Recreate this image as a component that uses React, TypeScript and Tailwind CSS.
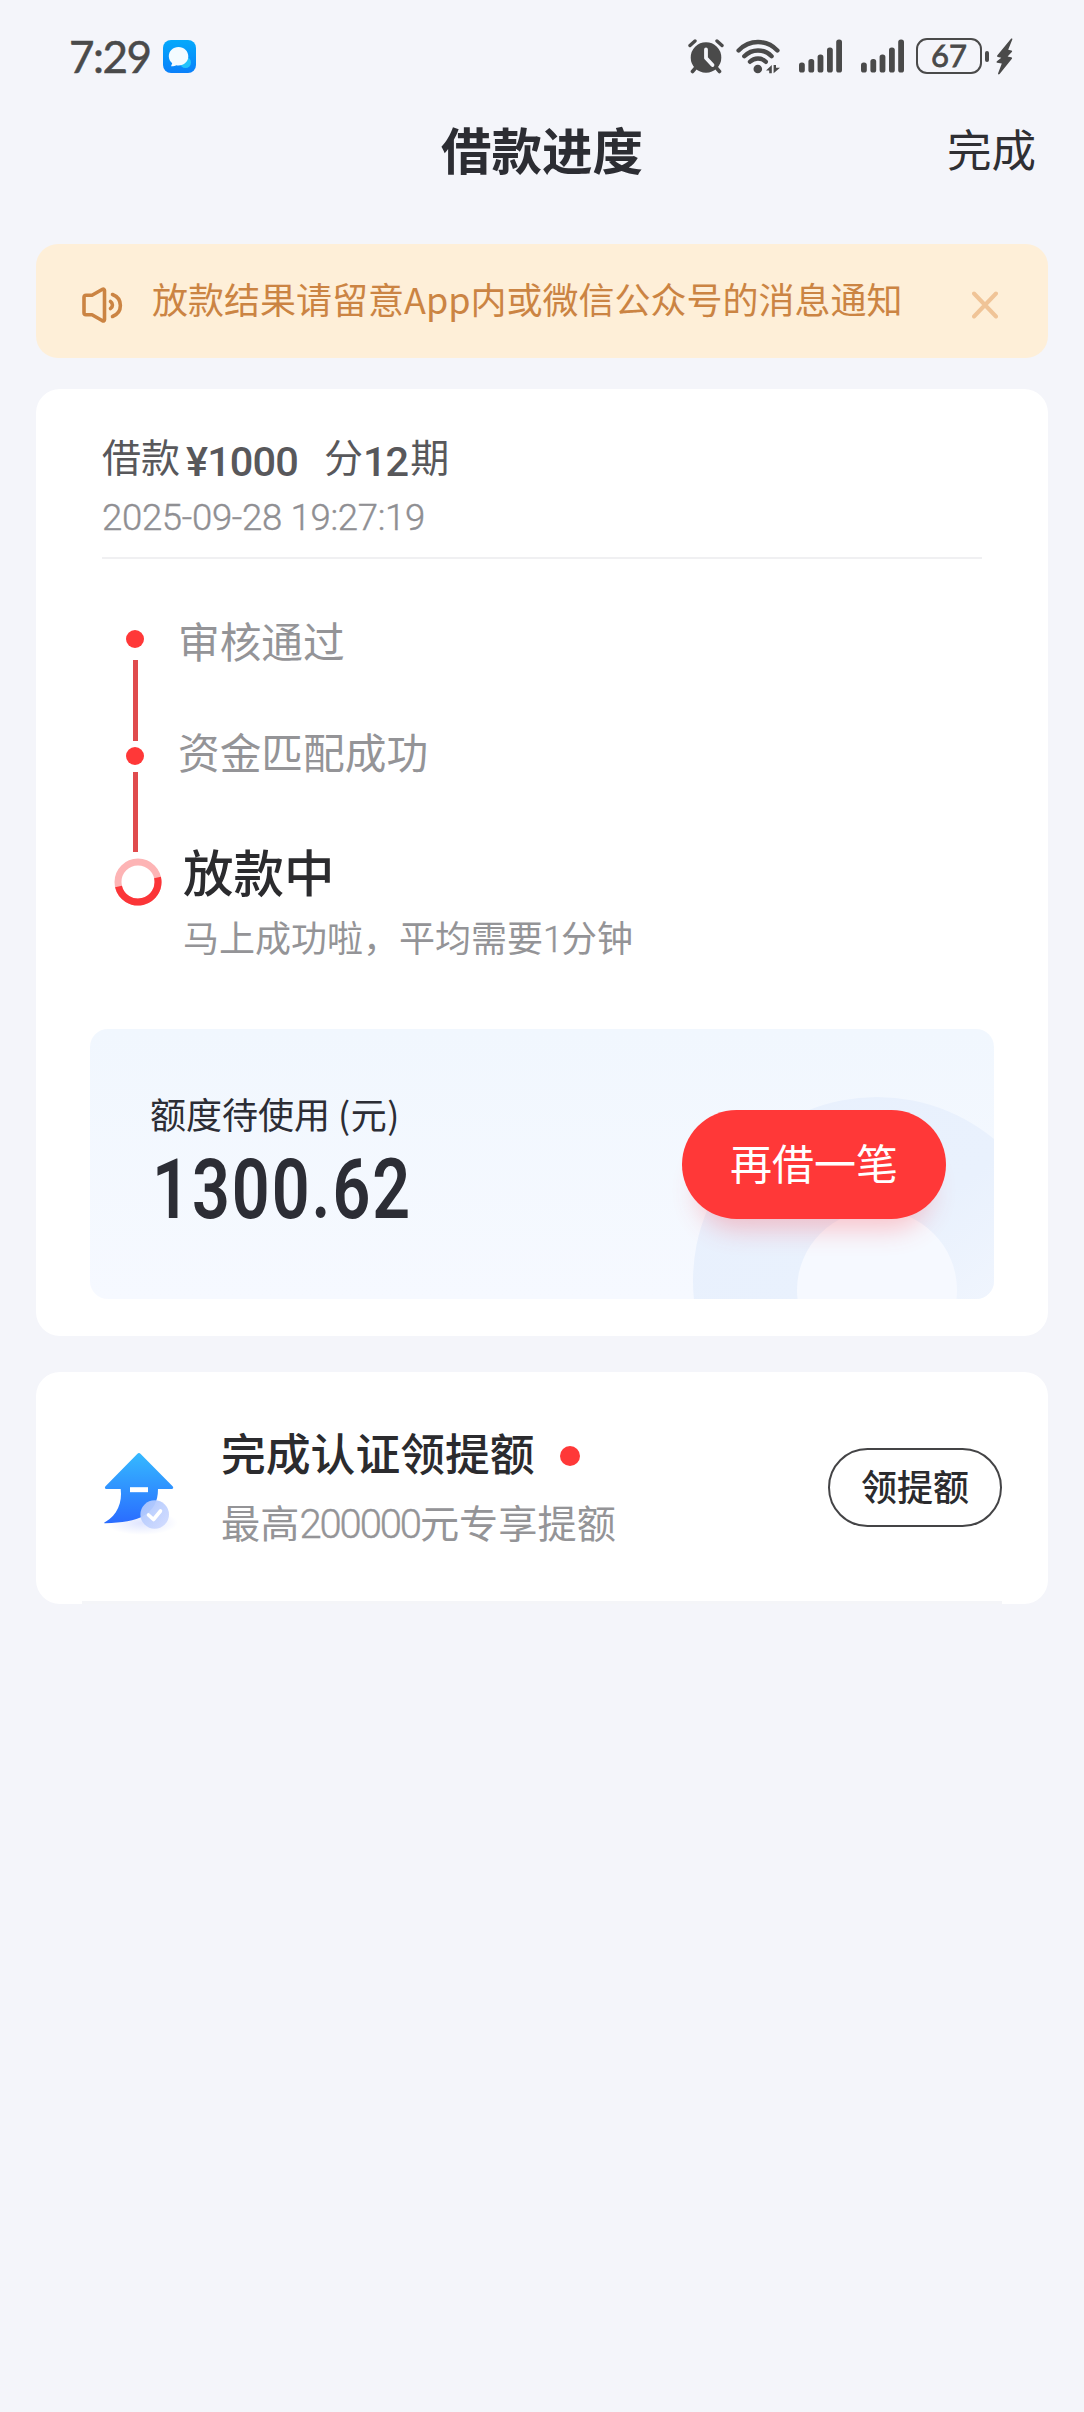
// src/App.tsx

import React from 'react';

interface StepItem {
    label: string;
    className: string;
}

const doneSteps: StepItem[] = [
    { label: '审核通过', className: 'mt-[51px]' },
    { label: '资金匹配成功', className: 'mt-[51px]' },
];

const signalBars = [
    { x: 0, h: 10 },
    { x: 9.4, h: 13.5 },
    { x: 18.6, h: 18 },
    { x: 28, h: 25 },
    { x: 37.2, h: 33 },
];

const MessageAppIcon: React.FC = () => (
    <svg className="ml-[12px] w-[33px] h-[33px]" viewBox="0 0 33 33">
        <defs>
            <linearGradient id="msgBg" x1="0" y1="0" x2="0" y2="1">
                <stop offset="0" stopColor="#04a9fb" />
                <stop offset="1" stopColor="#0a80fa" />
            </linearGradient>
        </defs>
        <rect width="33" height="33" rx="8" fill="url(#msgBg)" />
        <circle cx="22.5" cy="22.5" r="5.5" fill="#22c3fb" />
        <path d="M15.5 7C10 7 5.800 11 5.800 16.300c0 2.900 1.300 5.200 3.400 6.900L8 26.200c2 .2 4-.4 5.200-1 .8.200 1.500.3 2.300.3 5.500 0 9.800-4 9.800-9.200S21 7 15.500 7z" fill="#f3fbff" />
    </svg>
);

const AlarmIcon: React.FC = () => (
    <svg className="w-[36px] h-[35px]" viewBox="0 0 36 35" fill="none" strokeLinecap="round">
        <circle cx="18" cy="18.500" r="15.300" fill="#4a4a4a" />
        <path d="M2 6.500 7 2M34 6.500 29 2" stroke="#4a4a4a" strokeWidth="3.400" />
        <path d="m7.500 29-3 3.500M28.500 29l3 3.500" stroke="#4a4a4a" strokeWidth="3.600" />
        <path d="M18 10.500v8.500l6.500 7" stroke="#f4f5fa" strokeWidth="3.800" strokeLinejoin="round" />
    </svg>
);

const WifiIcon: React.FC = () => (
    <svg className="ml-[12px] w-[44px] h-[35px]" viewBox="0 0 44 35" fill="none" stroke="#4a4a4a" strokeWidth="4.400" strokeLinecap="round">
        <path d="M2.600 11.500C13.500.2 30.500.2 41.400 11.500" />
        <path d="M8.300 17.200c7.700-7.700 19.600-7.700 27.300 0" />
        <path d="M14 22.800c4.400-4.400 11.600-4.400 15.800 0" />
        <circle cx="21.800" cy="30" r="4.300" fill="#4a4a4a" stroke="none" />
        <path d="M35.800 26v8.300h-2.600V31.500h-3.200zM37.600 34.300V26h2.400v2.800h4z" fill="#4a4a4a" stroke="none" />
    </svg>
);

const SignalIcon: React.FC = () => (
    <svg className="ml-[19px] w-[43px] h-[34px]" viewBox="0 0 43 34" fill="#4a4a4a">
        {signalBars.map(bar => (
            <rect key={bar.x} x={bar.x} y={33.5 - bar.h} width="5.800" height={bar.h} rx="2.600" />
        ))}
    </svg>
);

const BoltIcon: React.FC = () => (
    <svg className="ml-[7px] w-[17px] h-[37px]" viewBox="0 0 17 37" fill="#4a4a4a">
        <path d="M15 .8 1.400 17.200c-.6.8-.4 1.500.5 1.700l3.400.8-4.400 3.600c-.6.6-.5 1.300.3 1.500l4.600.8-3.700 9.600c-.3 1.200.7 1.600 1.500.7L15.700 21c.7-.8.4-1.600-.5-1.800l-3.600-.8 4.200-4.400c.6-.7.4-1.400-.4-1.600l-3.200-.6L16.300 1.600c.4-1.100-.6-1.600-1.300-.8z" />
    </svg>
);

const SpeakerIcon: React.FC = () => (
    <svg className="w-[42px] h-[36px]" viewBox="0 0 42 36" fill="none" stroke="#cb8443" strokeWidth="3.600" strokeLinecap="round" strokeLinejoin="round">
        <path d="M20.500 2.300 10 8.200H4c-1.300 0-2 .8-2 2v15.600c0 1.200.7 2 2 2h6l10.500 6c1 .5 2 0 2-1.200V3.500c0-1.200-1-1.700-2-1.200z" />
        <path d="M28.500 14.500c2.600 1.700 2.600 5.400 0 7" />
        <path d="M30.500 7.500c10.500 4 10.500 18 0 22" />
    </svg>
);

const UpgradeIcon: React.FC = () => (
    <svg className="w-[84px] h-[90px]" viewBox="0 0 84 90">
        <defs>
            <linearGradient id="arrowFill" x1="0" y1="0" x2="0" y2="1">
                <stop offset="0" stopColor="#35b9ff" />
                <stop offset="1" stopColor="#2a6cff" />
            </linearGradient>
            <linearGradient id="badgeFill" x1="0" y1="0" x2="1" y2="1">
                <stop offset="0" stopColor="#a9c4fd" />
                <stop offset="1" stopColor="#d3dcff" />
            </linearGradient>
            <radialGradient id="glow">
                <stop offset="0" stopColor="#dfe5ff" />
                <stop offset="1" stopColor="#dfe5ff" stopOpacity="0" />
            </radialGradient>
        </defs>
        <ellipse cx="42" cy="78" rx="36" ry="12" fill="url(#glow)" />
        <path d="M40.700 8.900a2.500 2.500 0 0 0-3.500 0L5.500 41.200c-1.200 1.300-.6 2.800 1 2.800h14.200c1.800 13-3.500 26.500-15.500 33 -1.800.9-1 1.300.4 1.200C38 77.500 58 70 58 44h13.600c1.600 0 2.200-1.500 1-2.800z" fill="url(#arrowFill)" />
        <rect x="30" y="42.200" width="18" height="5" fill="#fff" />
        <circle cx="54.700" cy="69.500" r="14.300" fill="url(#badgeFill)" fillOpacity=".94" />
        <path d="m48.500 70 5 4.500 7-8.500" fill="none" stroke="#fff" strokeWidth="3.600" strokeLinecap="round" strokeLinejoin="round" />
    </svg>
);

const StatusBar: React.FC = () => (
    <div className="flex h-[40px] mt-[36px] pl-[69px] pr-[71px] items-center">
        <span className="font-['Lato'] text-[44px] leading-[40px] tracking-[-1.500px] text-[#4a4a4a] [-webkit-text-stroke:0.5px_#4a4a4a]">7:29</span>
        <MessageAppIcon />
        <div className="ml-auto flex items-center">
            <AlarmIcon />
            <WifiIcon />
            <SignalIcon />
            <SignalIcon />
            <div className="ml-[12px] w-[66px] h-[36px] rounded-[11px] border-[2px] border-[#4a4a4a] pb-[1px] flex items-center justify-center font-['Lato'] text-[31px] leading-none text-[#4a4a4a] [-webkit-text-stroke:0.8px_#4a4a4a]">
                67
            </div>
            <div className="ml-[3px] w-[4px] h-[11px] rounded-full bg-[#4a4a4a]" />
            <BoltIcon />
        </div>
    </div>
);

const TitleBar: React.FC = () => (
    <div className="grid grid-cols-3 h-[80px] mt-[32px] px-[48px] items-center">
        <span />
        <h1 className="text-center font-bold text-[50.500px] text-[#2c2d33]">借款进度</h1>
        <button className="text-right text-[44.500px] text-[#2f2f33]">完成</button>
    </div>
);

const NoticeBanner: React.FC = () => (
    <div className="mt-[56px] h-[114px] rounded-[22px] bg-[#feefd8] pl-[46px] pr-[50px] flex items-center">
        <div className="mt-[8px]">
            <SpeakerIcon />
        </div>
        <p className="ml-[28px] -mt-[6px] text-[36px] text-[#cb8443] whitespace-nowrap">
            放款结果请留意App内或微信公众号的消息通知
        </p>
        <svg className="ml-auto mt-[8px] w-[26px] h-[28px]" viewBox="0 0 26 28" stroke="#f0c497" strokeWidth="4" strokeLinecap="round">
            <path d="m2 2.500 22 23M24 2.500l-22 23" />
        </svg>
    </div>
);

const ProgressTimeline: React.FC = () => (
    <div className="flex h-[470px] pl-[78px]">
        <div className="w-[48px] pt-[71px] flex flex-col shrink-0">
            <div className="ml-[12px] size-[18px] rounded-full bg-[#ff3838]" />
            <div className="ml-[19px] mt-[12px] w-[5px] h-[81px] bg-[#e04b4d]" />
            <div className="ml-[12px] mt-[6px] size-[18px] rounded-full bg-[#ff3838]" />
            <div className="ml-[19px] mt-[7px] w-[5px] h-[80px] bg-[#e04b4d]" />
            <svg className="mt-[6px] size-[48px]" viewBox="0 0 48 48" fill="none" strokeWidth="7">
                <circle cx="24" cy="24" r="20" stroke="#fdb4b5" />
                <path d="M43.500 19.500A20 20 0 1 1 4.500 28.500" stroke="#fb3538" />
            </svg>
        </div>
        <div className="pl-[16px] flex flex-col">
            {doneSteps.map(step => (
                <div key={step.label} className={`${step.className} h-[60px] leading-[60px] text-[41.700px] text-[#949497]`}>
                    {step.label}
                </div>
            ))}
            <div className="mt-[59px] ml-[5px] h-[60px] leading-[60px] text-[50.500px] font-medium text-[#2b2b2e]">放款中</div>
            <div className="mt-[14px] ml-[5px] h-[44px] leading-[44px] text-[36px] text-[#949497]">
                马上成功啦，平均需要<span className="font-['Roboto'] font-light leading-none tracking-[-2px] [-webkit-text-stroke:0.4px_#949497]">1</span>分钟
            </div>
        </div>
    </div>
);

const QuotaPanel: React.FC = () => (
    <div className="relative overflow-hidden ml-[54px] w-[904px] h-[270px] rounded-[18px] bg-linear-to-b from-[#f1f7fe] to-[#f6f9ff] flex">
        <svg className="absolute left-0 top-0 w-[904px] h-[270px]" viewBox="0 0 904 270">
            <defs>
                <linearGradient id="ringFill" x1="0" y1="0" x2="0.8" y2="1">
                    <stop offset="0" stopColor="#e8f0fd" />
                    <stop offset=".5" stopColor="#e9f1fd" />
                    <stop offset=".85" stopColor="#f3f7fe" />
                </linearGradient>
            </defs>
            <circle cx="787" cy="252" r="184" fill="url(#ringFill)" />
            <circle cx="787" cy="261" r="80" fill="#f6f9ff" />
        </svg>
        <div className="relative pl-[60px] pt-[62px]">
            <div className="h-[44px] leading-[44px] text-[36px] text-[#2c2d35]">
                额度待使用 <span className="tracking-[0.500px]">(元)</span>
            </div>
            <div className="mt-[13px] ml-[2px] h-[84px] leading-[84px] font-['Roboto'] font-semibold text-[84px] tracking-[2.500px] text-[#2c2d35] origin-left scale-x-[0.79]">
                1300.62
            </div>
        </div>
        <button className="relative ml-auto mr-[48px] mt-[81px] w-[264px] h-[109px] rounded-full bg-[#ff3838] text-white text-[42px] pb-[6px] shadow-[0_26px_26px_-16px_rgba(255,70,80,0.3)]">
            再借一笔
        </button>
    </div>
);

const LoanCard: React.FC = () => (
    <section className="mt-[31px] h-[947px] rounded-[24px] bg-white pt-[44px]">
        <div className="pl-[66px] h-[44px] flex items-center text-[39px] text-[#58585b]">
            <span>借款</span>
            <span className="ml-[6px] mt-[13px] font-['Roboto'] font-medium text-[41.500px] leading-none tracking-[-0.900px]">¥1000</span>
            <span className="ml-[26px]">分</span>
            <span className="mt-[13px] font-['Roboto'] font-medium text-[41.500px] leading-none tracking-[-0.900px]">12</span>
            <span className="ml-[2px]">期</span>
        </div>
        <div className="mt-[19px] pl-[66px] h-[44px] leading-[44px] font-['Roboto'] font-light text-[36.500px] tracking-[-0.300px] text-[#8f8f93] [-webkit-text-stroke:0.4px_#8f8f93]">
            2025-09-28 19:27:19
        </div>
        <div className="mt-[17px] ml-[66px] mr-[66px] h-[2px] bg-[#f0f0f2]" />
        <ProgressTimeline />
        <QuotaPanel />
    </section>
);

const CertifyCard: React.FC = () => (
    <section className="mt-[36px] h-[232px] rounded-[24px] bg-white flex flex-col">
        <div className="flex-1 flex items-start pl-[64px] pr-[46px]">
            <div className="pt-[73px]">
                <UpgradeIcon />
            </div>
            <div className="ml-[37px] pt-[52px]">
                <div className="flex items-center h-[56px] text-[44.800px] font-medium text-[#2b2b2e]">
                    完成认证领提额
                    <span className="ml-[25px] mt-[7px] size-[20px] rounded-full bg-[#ff3838]" />
                </div>
                <div className="mt-[16px] h-[50px] leading-[50px] text-[39.200px] text-[#949497]">
                    最高<span className="font-['Roboto'] font-light text-[40px] leading-none tracking-[-2.100px] [-webkit-text-stroke:0.4px_#949497]">200000</span>元专享提额
                </div>
            </div>
            <button className="ml-auto mt-[76px] w-[174px] h-[79px] rounded-full border-2 border-[#444446] text-[36px] font-medium text-[#2b2b2e] pb-[6px]">
                领提额
            </button>
        </div>
        <div className="mx-[46px] h-[3px] bg-[#f4f5f8]" />
    </section>
);

const App: React.FC = () => {
    return (
        <div className="w-[1084px] h-[2412px] overflow-hidden bg-[#f4f5fa] font-['Noto_Sans_CJK_SC',sans-serif] leading-none">
            <StatusBar />
            <TitleBar />
            <main className="px-[36px]">
                <NoticeBanner />
                <LoanCard />
                <CertifyCard />
            </main>
        </div>
    );
};

export default App;
